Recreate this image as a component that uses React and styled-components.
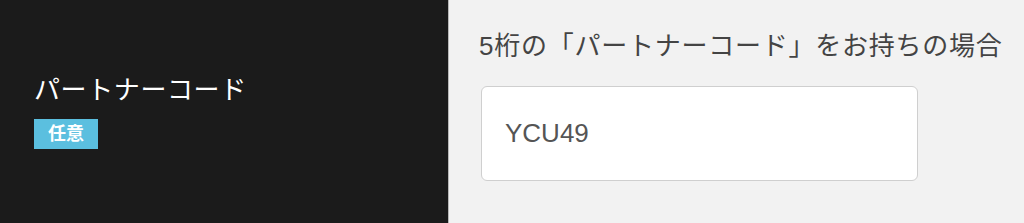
import React from "react"
import styled, { createGlobalStyle } from "styled-components"

const GlobalStyle = createGlobalStyle`
  html, body {
    margin: 0;
    padding: 0;
    background: #f2f2f2;
  }
  body {
    font-family: "Liberation Sans", "Noto Sans CJK JP", sans-serif;
  }
`

const Row = styled.div`
  display: flex;
  width: 1024px;
  height: 223px;
`

const Head = styled.div`
  width: 449px;
  flex-shrink: 0;
  background: #1b1b1b;
  border-right: 1px solid #b8b8b8;
  box-sizing: border-box;
  padding-left: 34px;
  display: flex;
  flex-direction: column;
  justify-content: center;
  gap: 14px;
`

const Label = styled.div`
  color: #ffffff;
  font-size: 26px;
  line-height: 30px;
  letter-spacing: 0.6px;
`

const Badge = styled.span`
  align-self: flex-start;
  background: #5bbfdf;
  color: #ffffff;
  font-weight: 700;
  font-size: 18px;
  line-height: 30px;
  padding: 0 14px;
`

const Body = styled.div`
  flex: 1;
  background: #f2f2f2;
  padding: 28px 0 0 30px;
`

const Note = styled.div`
  color: #444444;
  font-size: 26px;
  line-height: 36px;
  letter-spacing: 0.75px;
  white-space: nowrap;
`

const Input = styled.input`
  display: block;
  margin-top: 22px;
  margin-left: 2px;
  width: 437px;
  height: 95px;
  box-sizing: border-box;
  border: 1px solid #cfcfcf;
  border-radius: 6px;
  background: #ffffff;
  padding: 0 23px;
  font-family: "Liberation Sans", "Noto Sans CJK JP", sans-serif;
  font-size: 26px;
  color: #555555;
  outline: none;
`

export default function App() {
  return (
    <>
      <GlobalStyle />
      <Row>
        <Head>
          <Label>パートナーコード</Label>
          <Badge>任意</Badge>
        </Head>
        <Body>
          <Note>5桁の「パートナーコード」をお持ちの場合</Note>
          <Input type="text" defaultValue="YCU49" />
        </Body>
      </Row>
    </>
  )
}
